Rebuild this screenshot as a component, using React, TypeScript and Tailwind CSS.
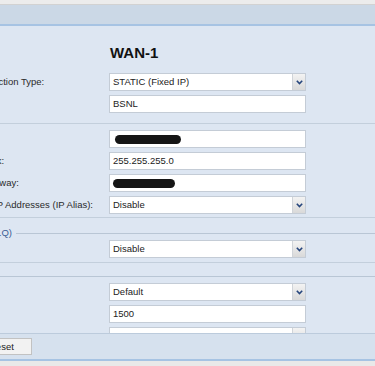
const font = { fontFamily: '"Liberation Sans", Arial, sans-serif' };

function Chevron() {
  return (
    <svg width="7" height="5" viewBox="0 0 7 5" className="block">
      <polyline points="0.8,0.8 3.5,3.6 6.2,0.8" fill="none" stroke="#27467d" strokeWidth="1.6" />
    </svg>
  );
}

function Select({ value }: { value: string }) {
  return (
    <div className="w-[197px] h-[18px] flex bg-white border border-[#c4ccd6] shrink-0">
      <div className="flex-1 pl-[3px] text-[9.5px] leading-[16px] text-[#222]">{value}</div>
      <div className="w-[13px] h-full border-l border-[#d0d4d9] bg-gradient-to-b from-[#f3f3f3] to-[#d9d9d9] flex items-center justify-center">
        <Chevron />
      </div>
    </div>
  );
}

function Input({ value, blob }: { value?: string; blob?: string }) {
  return (
    <div className="w-[197px] h-[18px] flex items-center bg-white border border-[#c4ccd6] shrink-0 pl-[3px]">
      {blob ? (
        <span className={`${blob} block h-[9px] rounded-full bg-[#151515]`} />
      ) : (
        <span className="text-[9.5px] leading-[16px] text-[#222]">{value}</span>
      )}
    </div>
  );
}

function Row({ label, children }: { label?: string; children: React.ReactNode }) {
  return (
    <div className="flex items-center h-[18px] -ml-[54px]">
      <div className="w-[163px] shrink-0 whitespace-nowrap text-[9.5px] text-[#2a2a2a]">{label}</div>
      {children}
    </div>
  );
}

function Legend({ text }: { text: string }) {
  return (
    <div className="flex items-center h-[12px]">
      <span className="whitespace-nowrap text-[9.5px] text-[#3b5d94] pr-[4px]">{text}</span>
      <div className="flex-1 border-t border-[#b9c6d5]" />
    </div>
  );
}

export default function App() {
  return (
    <div style={font} className="w-[375px] h-[366px] overflow-hidden bg-[#dde6f2] flex flex-col">
      <div className="h-[5px] bg-[#ececec] border-b border-[#d2d2d2] shrink-0" />
      <div className="h-[19px] bg-[#cbd8e6] shrink-0" />
      <div className="h-[2px] bg-[#a6c3e3] shrink-0" />

      <div className="h-[307px] shrink-0 overflow-hidden">
        <div className="pt-[18px] pl-[110px] h-[18px] box-content text-[15px] leading-[18px] font-bold text-[#111]">
          WAN-1
        </div>
        <div className="mt-[11px] flex flex-col gap-[4px]">
          <Row label="WAN Connection Type:">
            <Select value="STATIC (Fixed IP)" />
          </Row>
          <Row label="">
            <Input value="BSNL" />
          </Row>
        </div>
        <div className="mt-[10px] border-t border-[#c3cfdc]" />
        <div className="mt-[6px] flex flex-col gap-[4px]">
          <Row label="IP Address:">
            <Input blob="w-[66px] ml-[2px]" />
          </Row>
          <Row label="Subnet Mask:">
            <Input value="255.255.255.0" />
          </Row>
          <Row label="Default Gateway:">
            <Input blob="w-[62px]" />
          </Row>
          <Row label="Secondary IP  Addresses (IP Alias):">
            <Select value="Disable" />
          </Row>
        </div>
        <div className="mt-[3px] border-t border-[#c3cfdc]" />
        <div className="mt-[9px] -ml-[53px]">
          <Legend text="VLAN (802.1Q)" />
        </div>
        <div className="mt-[1px]">
          <Row label="VLAN:">
            <Select value="Disable" />
          </Row>
        </div>
        <div className="mt-[4px] border-t border-[#c3cfdc]" />
        <div className="mt-[7px] -ml-[100px]">
          <Legend text="Advanced" />
        </div>
        <div className="mt-[1px] flex flex-col gap-[4px]">
          <Row label="MTU:">
            <Select value="Default" />
          </Row>
          <Row label="">
            <Input value="1500" />
          </Row>
          <Row label="Speed:">
            <Select value="" />
          </Row>
        </div>
      </div>

      <div className="h-[26px] shrink-0 border-t border-[#bccbdc] bg-[#d6e1ee] flex items-center">
        <button className="-ml-[20px] w-[52px] h-[17px] bg-[#f2f2f2] border border-[#c2c2c2] text-left pl-[8px] text-[9.5px] leading-[15px] text-[#222]">
          Reset
        </button>
      </div>
      <div className="h-[2px] bg-[#a6c3e3] shrink-0" />
      <div className="flex-1 bg-[#e9e9e9]" />
    </div>
  );
}
